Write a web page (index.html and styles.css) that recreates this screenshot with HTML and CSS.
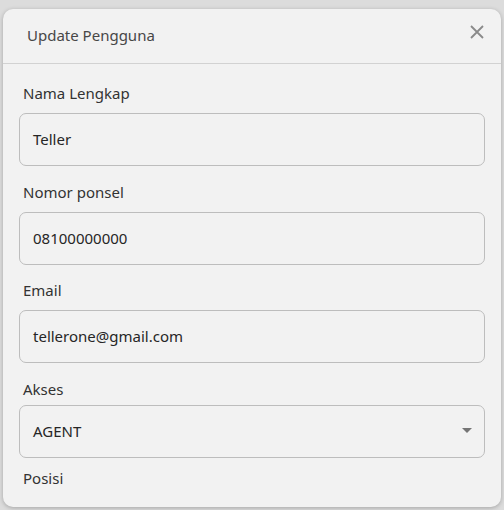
FILE: index.html
```html
<!DOCTYPE html>
<html>
<head>
<meta charset="utf-8">
<link rel="stylesheet" href="styles.css">
</head>
<body>
<div class="modal">
  <div class="modal-header">
    <span class="title">Update Pengguna</span>
    <button class="close" aria-label="close">
      <svg width="14" height="14" viewBox="0 0 14 14"><path d="M1 1L13 13M13 1L1 13" stroke="#8a8a8a" stroke-width="1.8" fill="none"/></svg>
    </button>
  </div>
  <div class="modal-body">
    <div class="field">
      <label class="label">Nama Lengkap</label>
      <div class="input">Teller</div>
    </div>
    <div class="field">
      <label class="label">Nomor ponsel</label>
      <div class="input">08100000000</div>
    </div>
    <div class="field">
      <label class="label">Email</label>
      <div class="input">tellerone@gmail.com</div>
    </div>
    <div class="field select-field">
      <label class="label">Akses</label>
      <div class="input select">AGENT<span class="caret"></span></div>
    </div>
    <div class="field last">
      <label class="label">Posisi</label>
    </div>
  </div>
</div>
</body>
</html>
```
FILE: styles.css
```css
* { box-sizing: border-box; }
html, body { margin: 0; padding: 0; }
body {
  width: 504px;
  height: 510px;
  background: #dcdcdc;
  font-family: "Noto Sans", "Open Sans", sans-serif;
  overflow: hidden;
}
.modal {
  margin: 9px 3px 0 3px;
  height: 498px;
  background: #f2f2f2;
  border-radius: 10px;
  box-shadow: 0 1px 4px rgba(0,0,0,0.25);
  overflow: hidden;
}
.modal-header {
  height: 55px;
  display: flex;
  align-items: center;
  justify-content: space-between;
  padding: 0 17px 3px 24px;
  border-bottom: 1px solid #d2d2d2;
}
.title {
  font-size: 15px;
  color: #474747;
  line-height: 20px;
}
.close {
  border: 0;
  background: none;
  padding: 0;
  width: 14px;
  height: 14px;
  margin-top: -5px;
  display: block;
}
.close svg { display: block; }
.modal-body {
  padding: 20px 16px 0 16px;
  display: flex;
  flex-direction: column;
  gap: 16.5px;
}
.field {
  display: flex;
  flex-direction: column;
  gap: 9px;
}
.select-field { gap: 5px; }
.label {
  padding-left: 4px;
  padding-bottom: 2px;
  font-size: 15px;
  line-height: 18px;
  color: #333;
}
.input {
  height: 53px;
  border: 1px solid #bdbdbd;
  border-radius: 7px;
  padding: 0 13px;
  display: flex;
  align-items: center;
  padding-bottom: 1px;
  font-size: 15px;
  color: #262626;
}
.select {
  justify-content: space-between;
}
.caret {
  width: 0;
  height: 0;
  border-left: 5px solid transparent;
  border-right: 5px solid transparent;
  border-top: 5px solid #757575;
  margin-right: -1px;
}
.last { margin-top: -5px; }
```
